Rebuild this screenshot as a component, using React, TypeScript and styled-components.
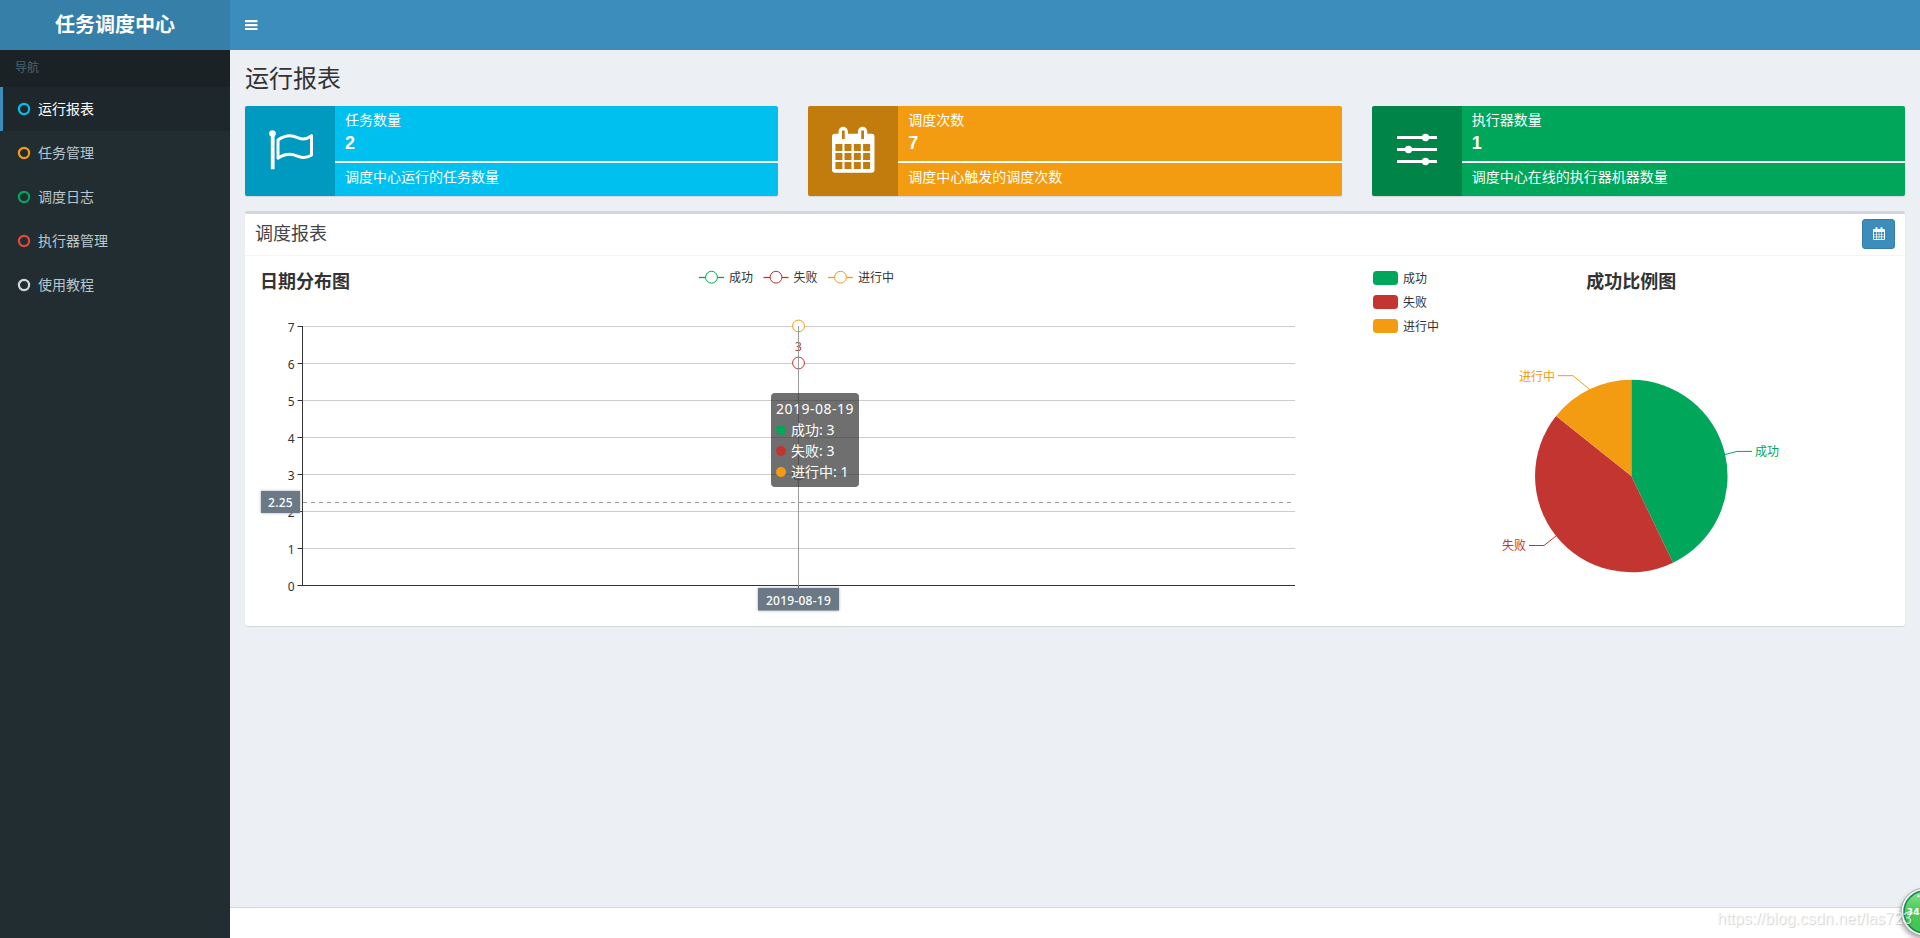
import React from "react";
import styled, { createGlobalStyle } from "styled-components";

const sans = `"Liberation Sans", "Noto Sans CJK SC", sans-serif`;
const chartFont = `"Noto Sans", "Noto Sans CJK SC", sans-serif`;
const GREEN = "#00a65a";
const RED = "#c23531";
const ORANGE = "#f39c12";

const Global = createGlobalStyle`
  *, *::before, *::after { box-sizing: border-box; }
  body {
    margin: 0;
    overflow: hidden;
    background: #ecf0f5;
    color: #333;
    font: 14px/20px ${sans};
  }
  h1, h3, p { margin: 0; font-weight: 400; }
  svg { display: block; flex: none; }
`;

const Page = styled.div`
  display: grid;
  grid-template-columns: 230px 1fr;
  grid-template-rows: 50px 1fr;
  height: 938px;
  overflow: hidden;
`;

const Logo = styled.div`
  padding-top: 1px;
  background: #367fa9;
  color: #fff;
  font-size: 20px;
  font-weight: 700;
  line-height: 49px;
  text-align: center;
`;

const Navbar = styled.header`
  display: flex;
  align-items: center;
  padding-left: 15px;
  background: #3c8dbc;
`;

const Sidebar = styled.nav`
  display: flex;
  flex-direction: column;
  background: #222d32;
`;

const NavHeading = styled.div`
  height: 37px;
  padding: 8px 15px 0;
  background: #1a2226;
  color: #4b646f;
  font-size: 12px;
`;

const NavItem = styled.a<{ $active?: boolean }>`
  display: flex;
  align-items: center;
  gap: 7px;
  height: 44px;
  padding: 0 15px 0 14px;
  border-left: 3px solid ${(p) => (p.$active ? "#3c8dbc" : "transparent")};
  background: ${(p) => (p.$active ? "#1e282c" : "transparent")};
  color: ${(p) => (p.$active ? "#fff" : "#b8c7ce")};
`;

const Main = styled.div`
  display: flex;
  flex-direction: column;
  min-width: 0;
`;

const Content = styled.main`
  flex: 1;
  padding: 15px;
`;

const PageTitle = styled.h1`
  height: 41px;
  font-size: 24px;
  line-height: 28px;
`;

const Tiles = styled.div`
  display: grid;
  grid-template-columns: repeat(3, 1fr);
  gap: 30px;
  margin-bottom: 15px;
`;

const Tile = styled.section<{ $color: string }>`
  display: flex;
  height: 90px;
  border-radius: 2px;
  overflow: hidden;
  background: ${(p) => p.$color};
  color: #fff;
  box-shadow: 0 1px 1px rgba(0, 0, 0, 0.1);
`;

const TileIcon = styled.div`
  display: flex;
  flex: none;
  width: 90px;
  background: rgba(0, 0, 0, 0.2);
`;

const TileBody = styled.div`
  flex: 1;
  padding: 5px 0;
`;

const TileText = styled.p`
  height: 20px;
  padding: 0 10px;
  line-height: 19px;
`;

const TileNumber = styled.p`
  height: 25px;
  padding: 0 10px;
  font-size: 18px;
  font-weight: 700;
  line-height: 25px;
`;

const TileRule = styled.div`
  height: 2px;
  margin: 5px 0;
  background: #fff;
`;

const Panel = styled.section`
  border-top: 3px solid #d2d6de;
  border-radius: 3px;
  background: #fff;
  box-shadow: 0 1px 1px rgba(0, 0, 0, 0.1);
`;

const PanelHeader = styled.div`
  display: flex;
  align-items: flex-start;
  justify-content: space-between;
  height: 42px;
  padding: 5px 10px;
  border-bottom: 1px solid #f4f4f4;
`;

const PanelTitle = styled.h3`
  color: #444;
  font-size: 18px;
  line-height: 31px;
`;

const DateButton = styled.button`
  display: flex;
  align-items: center;
  justify-content: center;
  width: 33px;
  height: 30px;
  padding: 0;
  border: 1px solid #367fa9;
  border-radius: 3px;
  background: #3c8dbc;
`;

const PanelBody = styled.div`
  display: grid;
  grid-template-columns: 1083px 527px;
  gap: 30px;
  padding: 10px;
`;

const ChartFrame = styled.div`
  position: relative;
  height: 350px;
`;

const Chart = styled.svg`
  overflow: visible;
  font-family: ${chartFont};
  font-size: 12px;
  fill: #333;
`;

const ChartTitle = styled.text`
  font-size: 18px;
  font-weight: 700;
`;

const PointerLabels = styled.g`
  filter: drop-shadow(0 0 1.5px #aaa);
`;

const Tooltip = styled.div`
  position: absolute;
  left: 516px;
  top: 127px;
  width: 88px;
  height: 94px;
  padding: 5px;
  border-radius: 4px;
  background: rgba(50, 50, 50, 0.7);
  color: #fff;
  font: 14px/21px ${chartFont};
  white-space: nowrap;
`;

const TooltipDate = styled.div`
  letter-spacing: 0.5px;
`;

const TooltipRow = styled.div`
  display: flex;
  align-items: center;
  gap: 5px;
`;

const Dot = styled.span<{ $color: string }>`
  width: 10px;
  height: 10px;
  border-radius: 50%;
  background: ${(p) => p.$color};
`;

const Footer = styled.footer`
  height: 31px;
  border-top: 1px solid #d2d6de;
  background: #fff;
`;

const Watermark = styled.div`
  position: absolute;
  left: 1717px;
  top: 909px;
  color: rgba(255, 255, 255, 0.7);
  font-size: 16px;
  text-shadow: 1px 1px 1px rgba(0, 0, 0, 0.18);
`;

const Badge = styled.div`
  position: absolute;
  left: 1894px;
  top: 880px;
  width: 26px;
  height: 58px;
  overflow: hidden;
`;

const FlagIcon = () => (
  <svg width="90" height="90" fill="none" stroke="#fff">
    <circle cx="27.500" cy="27.600" r="3.300" fill="#fff" stroke="none" />
    <path d="M27.700 28v35.300" strokeWidth="3.800" />
    <path d="M33 34C37 31 41 29.700 45 29.700C51 29.700 54 33.200 58.500 33C61.500 32.800 64 31.500 66.500 29.700V49C63.500 51 61 51.700 58 51.500C53 51.300 50 48.300 45 48.300C40.500 48.300 36.500 49.800 33 52.200Z" strokeWidth="3" strokeLinejoin="round" />
  </svg>
);

const CalendarIcon = () => (
  <svg width="90" height="90">
    <path fill="#fff" d="M27 27.700h3.500v-2.200a4.700 4.700 0 0 1 9.400 0v2.200h10v-2.200a4.700 4.700 0 0 1 9.400 0v2.200h4.200a3 3 0 0 1 3 3v33a3 3 0 0 1-3 3H27a3 3 0 0 1-3-3v-33a3 3 0 0 1 3-3z" />
    <path stroke="#c27d0e" strokeWidth="2.800" d="M35.300 24.500v8.500M54.600 24.500v8.500" />
    <g fill="#c27d0e">
      {[38, 47, 56].map((y) => [27.4, 36.5, 45.8, 55.1].map((x) => <rect key={`${x}-${y}`} x={x} y={y} width="7" height="7" />))}
    </g>
  </svg>
);

const SlidersIcon = () => (
  <svg width="90" height="90" fill="#fff">
    <path d="M25 30h40v3H25zM25 42h40v3H25zM25 54h40v3H25z" />
    <circle cx="53.500" cy="31.500" r="3.700" />
    <circle cx="36.500" cy="43.500" r="3.700" />
    <circle cx="53.500" cy="55.500" r="3.700" />
  </svg>
);

const SmallCalendar = () => (
  <svg width="12" height="14" viewBox="0 0 12 14">
    <path fill="#fff" d="M1 2h1.500V1a1 1 0 0 1 2 0v1h3V1a1 1 0 0 1 2 0v1H11a1 1 0 0 1 1 1v9a1 1 0 0 1-1 1H1a1 1 0 0 1-1-1V3a1 1 0 0 1 1-1z" />
    <path fill="#3c8dbc" d="M1 5h2v2H1zM3.700 5h2v2h-2zM6.300 5h2v2h-2zM9 5h2v2H9zM1 7.600h2v2H1zM3.700 7.600h2v2h-2zM6.300 7.600h2v2h-2zM9 7.600h2v2H9zM1 10.200h2V12H1zM3.700 10.200h2V12h-2zM6.300 10.200h2V12h-2zM9 10.200h2V12H9z" />
  </svg>
);

const navItems = [
  { label: "运行报表", color: "#00c0ef" },
  { label: "任务管理", color: "#f39c12" },
  { label: "调度日志", color: "#00a65a" },
  { label: "执行器管理", color: "#dd4b39" },
  { label: "使用教程", color: "#d2d6de" },
];

const tiles = [
  { title: "任务数量", value: 2, note: "调度中心运行的任务数量", color: "#00c0ef", Icon: FlagIcon },
  { title: "调度次数", value: 7, note: "调度中心触发的调度次数", color: "#f39c12", Icon: CalendarIcon },
  { title: "执行器数量", value: 1, note: "调度中心在线的执行器机器数量", color: "#00a65a", Icon: SlidersIcon },
];

const statuses = [
  { label: "成功", value: 3, color: GREEN },
  { label: "失败", value: 3, color: RED },
  { label: "进行中", value: 1, color: ORANGE },
];

const legendX = [444, 508.5, 573];

const LineChart = () => (
  <Chart width="1083" height="350">
    <ChartTitle x="5" y="22">日期分布图</ChartTitle>
    {statuses.map((s, i) => (
      <g key={s.label}>
        <path d={`M${legendX[i]} 11.500h25`} stroke={s.color} strokeWidth="1.300" />
        <circle cx={legendX[i] + 12.5} cy="11.200" r="5.900" fill="#fff" stroke={s.color} />
        <text x={legendX[i] + 30} y="16">{s.label}</text>
      </g>
    ))}
    {[0, 1, 2, 3, 4, 5, 6, 7].map((n) => {
      const y = 319.5 - n * 37;
      return (
        <g key={n}>
          {n > 0 && <path d={`M48 ${y}H1040`} stroke="#ccc" />}
          <path d={`M42.500 ${y}h5`} stroke="#333" />
          <text x="39.500" y={y + 5} textAnchor="end">{n}</text>
        </g>
      );
    })}
    <path d="M47.500 60V320M47 319.500H1040M543.500 320v5" stroke="#333" fill="none" />
    <circle cx="543.500" cy="60" r="5.900" fill="#fff" stroke={ORANGE} />
    <circle cx="543.500" cy="97" r="5.900" fill="#fff" stroke={RED} />
    <circle cx="543.500" cy="208" r="5.900" fill="#fff" stroke={GREEN} />
    <text x="543.500" y="85" textAnchor="middle" fill={RED}>3</text>
    <path d="M543.500 60V320" stroke="#999" />
    <path d="M48 236.500H1040" stroke="#999" strokeDasharray="4 4" />
    <PointerLabels fill="#6a7985">
      <rect x="6" y="225" width="39" height="22" />
      <rect x="503" y="322" width="81" height="22.500" />
    </PointerLabels>
    <g fill="#fff" fontWeight="500" textAnchor="middle" letterSpacing="0.250">
      <text x="25.500" y="240.500">2.25</text>
      <text x="543.500" y="338.500">2019-08-19</text>
    </g>
  </Chart>
);

const CX = 263.3;
const CY = 210;
const R = 96.25;

const slice = (from: number, to: number) => {
  const point = (t: number) => `${CX + R * Math.sin(t * 2 * Math.PI)} ${CY - R * Math.cos(t * 2 * Math.PI)}`;
  return `M${CX} ${CY}L${point(from)}A${R} ${R} 0 0 1 ${point(to)}Z`;
};

const PieChart = () => (
  <Chart width="527" height="350">
    {statuses.map((s, i) => (
      <g key={s.label}>
        <rect x="5" y={5 + i * 24} width="25" height="14" rx="3.500" fill={s.color} />
        <text x="35" y={16.5 + i * 24}>{s.label}</text>
      </g>
    ))}
    <ChartTitle x={CX} y="22" textAnchor="middle">成功比例图</ChartTitle>
    <path d={slice(0, 3 / 7)} fill={GREEN} />
    <path d={slice(3 / 7, 6 / 7)} fill={RED} />
    <path d={slice(6 / 7, 1)} fill={ORANGE} />
    <g fill="none">
      <path d="M357.200 188.500L369 185.400h15" stroke={GREEN} />
      <path d="M188 270L176 279.500h-15" stroke={RED} />
      <path d="M221.500 123.300L205 109.700h-15" stroke={ORANGE} />
    </g>
    <text x="387" y="190" fill={GREEN}>成功</text>
    <text x="158" y="284" fill={RED} textAnchor="end">失败</text>
    <text x="187" y="115" fill={ORANGE} textAnchor="end">进行中</text>
  </Chart>
);

export default function App() {
  return (
    <>
      <Global />
      <Page>
        <Logo>任务调度中心</Logo>
        <Navbar>
          <svg width="13" height="10" fill="#fff">
            <path d="M0 0h12.500v2.300H0zM0 4h12.500v2.200H0zM0 8h12.500v2H0z" />
          </svg>
        </Navbar>
        <Sidebar>
          <NavHeading>导航</NavHeading>
          {navItems.map((item, i) => (
            <NavItem key={item.label} $active={i === 0}>
              <svg width="14" height="14" fill="none">
                <circle cx="7" cy="7" r="5.100" stroke={item.color} strokeWidth="2.200" />
              </svg>
              {item.label}
            </NavItem>
          ))}
        </Sidebar>
        <Main>
          <Content>
            <PageTitle>运行报表</PageTitle>
            <Tiles>
              {tiles.map(({ title, value, note, color, Icon }) => (
                <Tile key={title} $color={color}>
                  <TileIcon><Icon /></TileIcon>
                  <TileBody>
                    <TileText>{title}</TileText>
                    <TileNumber>{value}</TileNumber>
                    <TileRule />
                    <TileText>{note}</TileText>
                  </TileBody>
                </Tile>
              ))}
            </Tiles>
            <Panel>
              <PanelHeader>
                <PanelTitle>调度报表</PanelTitle>
                <DateButton><SmallCalendar /></DateButton>
              </PanelHeader>
              <PanelBody>
                <ChartFrame>
                  <LineChart />
                  <Tooltip>
                    <TooltipDate>2019-08-19</TooltipDate>
                    {statuses.map((s) => (
                      <TooltipRow key={s.label}><Dot $color={s.color} />{s.label}: {s.value}</TooltipRow>
                    ))}
                  </Tooltip>
                </ChartFrame>
                <ChartFrame><PieChart /></ChartFrame>
              </PanelBody>
            </Panel>
          </Content>
          <Footer />
        </Main>
      </Page>
      <Badge>
        <svg width="60" height="60">
          <defs>
            <linearGradient id="orb" x1="0" y1="0" x2="0" y2="1">
              <stop offset="0" stopColor="#8be092" />
              <stop offset="0.450" stopColor="#4bc95c" />
              <stop offset="1" stopColor="#3fc552" />
            </linearGradient>
            <filter id="shade" x="-30%" y="-30%" width="160%" height="160%">
              <feGaussianBlur stdDeviation="2.500" />
            </filter>
          </defs>
          <circle cx="30" cy="35" r="24" fill="#000" opacity="0.350" filter="url(#shade)" />
          <circle cx="31" cy="32" r="24" fill="#f6f6f6" stroke="#a5a5a5" />
          <circle cx="31" cy="32" r="21" fill="url(#orb)" stroke="#168a55" strokeWidth="1.500" />
          <circle cx="24.500" cy="16" r="1.300" fill="#fff" opacity="0.800" />
          <text x="12.500" y="35" fill="#fff" fontSize="9.500" fontWeight="700" fontFamily="DejaVu Sans, sans-serif">34</text>
        </svg>
      </Badge>
      <Watermark>https://blog.csdn.net/las723</Watermark>
    </>
  );
}
